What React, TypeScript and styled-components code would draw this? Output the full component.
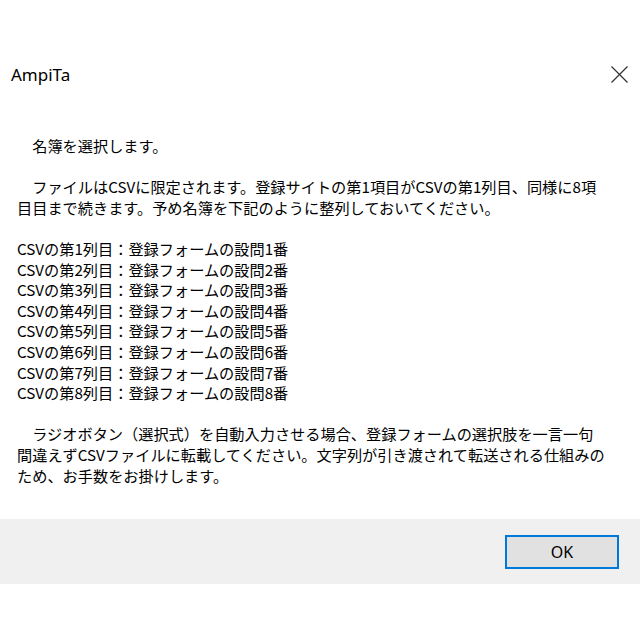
import React from "react";
import styled, { createGlobalStyle } from "styled-components";

const GlobalStyle = createGlobalStyle`
  html, body {
    margin: 0;
    padding: 0;
    background: #ffffff;
  }
`;

const Window = styled.div`
  width: 640px;
  height: 640px;
  background: #ffffff;
  display: flex;
  flex-direction: column;
  overflow: hidden;
`;

const TitleBar = styled.div`
  margin-top: 52px;
  height: 44px;
  display: flex;
  align-items: center;
  justify-content: space-between;
  padding: 0 12px 0 11px;
`;

const Title = styled.span`
  font-family: "Noto Sans", "Open Sans", sans-serif;
  font-size: 17px;
  color: #000000;
`;

const CloseButton = styled.button`
  width: 18px;
  height: 18px;
  padding: 0;
  border: none;
  background: transparent;
  display: flex;
  align-items: center;
  justify-content: center;
`;

const Body = styled.div`
  padding: 39px 17px 34px 17px;
`;

const Message = styled.div`
  font-family: "Noto Sans CJK JP", "Noto Sans", sans-serif;
  font-size: 15.2px;
  line-height: 20.6px;
  color: #000000;
  white-space: pre;
`;

const Line = styled.div`
  height: 20.6px;
`;

const Footer = styled.div`
  height: 65px;
  background: #f0f0f0;
  display: flex;
  align-items: center;
  justify-content: flex-end;
  padding-right: 21px;
`;

const OkButton = styled.button`
  width: 114px;
  height: 34px;
  box-sizing: border-box;
  border: 2px solid #0078d7;
  background: #e1e1e1;
  font-family: "Noto Sans", "Open Sans", sans-serif;
  font-size: 16px;
  color: #000000;
  padding: 0;
  margin: 0;
`;

const lines: string[] = [
  "　名簿を選択します。",
  "",
  "　ファイルはCSVに限定されます。登録サイトの第1項目がCSVの第1列目、同様に8項",
  "目目まで続きます。予め名簿を下記のように整列しておいてください。",
  "",
  ...[1, 2, 3, 4, 5, 6, 7, 8].map(
    (n) => `CSVの第${n}列目：登録フォームの設問${n}番`
  ),
  "",
  "　ラジオボタン（選択式）を自動入力させる場合、登録フォームの選択肢を一言一句",
  "間違えずCSVファイルに転載してください。文字列が引き渡されて転送される仕組みの",
  "ため、お手数をお掛けします。",
];

export default function App() {
  return (
    <>
      <GlobalStyle />
      <Window>
        <TitleBar>
          <Title>AmpiTa</Title>
          <CloseButton aria-label="閉じる">
            <svg width="17" height="17" viewBox="0 0 17 17">
              <path
                d="M0.5 0.5 L16.5 16.5 M16.5 0.5 L0.5 16.5"
                stroke="#333333"
                strokeWidth="1.2"
                fill="none"
              />
            </svg>
          </CloseButton>
        </TitleBar>
        <Body>
          <Message>
            {lines.map((t, i) => (
              <Line key={i}>{t}</Line>
            ))}
          </Message>
        </Body>
        <Footer>
          <OkButton>OK</OkButton>
        </Footer>
      </Window>
    </>
  );
}
